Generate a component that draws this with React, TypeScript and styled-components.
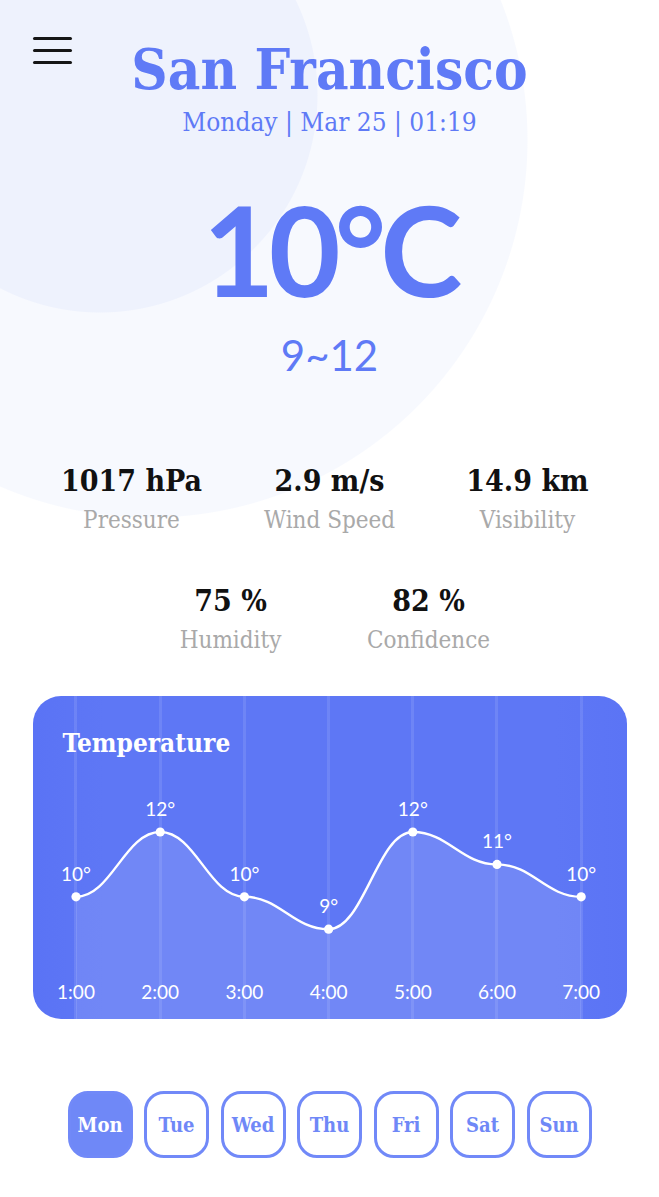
import React from "react";
import styled, { createGlobalStyle } from "styled-components";

const GlobalStyle = createGlobalStyle`
  html, body { margin: 0; padding: 0; background: #ffffff; }
  * { box-sizing: border-box; }
`;

const SLAB = `"DejaVu Serif Condensed", "DejaVu Serif", serif`;
const SANS = `Lato, "Noto Sans", sans-serif`;
const PRIMARY = "#5f7af6";

const Page = styled.div`
  width: 659px;
  min-height: 1197px;
  overflow: hidden;
  background:
    radial-gradient(circle 218px at 100px 95px, #eef2fd 217px, rgba(238, 242, 253, 0) 218px),
    radial-gradient(circle 378px at 150px 140px, #f7f9fe 377px, rgba(247, 249, 254, 0) 378px),
    #ffffff;
  display: flex;
  flex-direction: column;
  align-items: center;
`;

const Header = styled.header`
  width: 100%;
  display: grid;
  grid-template-columns: 1fr auto 1fr;
  align-items: start;
`;

const MenuButton = styled.div`
  margin: 37px 0 0 33px;
  width: 39px;
  display: flex;
  flex-direction: column;
  gap: 9px;
`;

const MenuBar = styled.span`
  display: block;
  height: 3px;
  border-radius: 2px;
  background: #161616;
`;

const City = styled.h1`
  margin: 41px 0 0;
  font-family: ${SLAB};
  font-weight: 700;
  font-size: 56px;
  line-height: 56px;
  color: ${PRIMARY};
  white-space: nowrap;
`;

const DateLine = styled.div`
  grid-column: 1 / -1;
  margin-top: 10px;
  text-align: center;
  font-family: ${SLAB};
  font-size: 26px;
  line-height: 30px;
  color: ${PRIMARY};
`;

const Temp = styled.div`
  margin-top: 50px;
  font-family: ${SANS};
  font-weight: 700;
  font-size: 124px;
  line-height: 124px;
  letter-spacing: -6px;
  color: ${PRIMARY};
`;

const Range = styled.div`
  margin-top: 19px;
  font-family: ${SANS};
  font-size: 42px;
  line-height: 50px;
  color: ${PRIMARY};
`;

const Stats = styled.section`
  margin-top: 84px;
  width: 594px;
  display: flex;
  flex-wrap: wrap;
  justify-content: center;
  row-gap: 50px;
`;

const Stat = styled.div`
  width: 198px;
  display: flex;
  flex-direction: column;
  align-items: center;
  gap: 8px;
`;

const StatValue = styled.div`
  font-family: ${SLAB};
  font-weight: 700;
  font-size: 30px;
  line-height: 34px;
  color: #111111;
  white-space: nowrap;
`;

const StatLabel = styled.div`
  font-family: ${SLAB};
  font-size: 24px;
  line-height: 28px;
  color: #a9a9a9;
  white-space: nowrap;
`;

const ChartCard = styled.section`
  margin-top: 42px;
  width: 594px;
  height: 323px;
  border-radius: 28px;
  overflow: hidden;
  display: flex;
  flex-direction: column;
  background:
    repeating-linear-gradient(
      90deg,
      rgba(255, 255, 255, 0) 0px,
      rgba(255, 255, 255, 0) 41.5px,
      rgba(255, 255, 255, 0.1) 41.5px,
      rgba(255, 255, 255, 0.1) 44.5px,
      rgba(255, 255, 255, 0) 44.5px,
      rgba(255, 255, 255, 0) 84.2px
    ),
    linear-gradient(90deg, #5a73f5 0%, #5e77f5 12%, #5e77f5 88%, #5b74f5 100%);
`;

const ChartTitle = styled.h2`
  margin: 32px 0 0 30px;
  font-family: ${SLAB};
  font-weight: 700;
  font-size: 26px;
  line-height: 30px;
  color: #ffffff;
`;

const ChartSvg = styled.svg`
  display: block;
  margin-top: 2px;
  flex: none;
`;

const Days = styled.nav`
  margin-top: 72px;
  display: flex;
  gap: 11.5px;
`;

const DayButton = styled.button<{ $active?: boolean }>`
  width: 65px;
  height: 67px;
  padding: 0;
  border: 3px solid #7189f8;
  border-radius: 20px;
  background: ${(p) => (p.$active ? "#6f88f7" : "#ffffff")};
  color: ${(p) => (p.$active ? "#ffffff" : "#6f88f7")};
  font-family: ${SLAB};
  font-weight: 700;
  font-size: 20px;
  display: flex;
  align-items: center;
  justify-content: center;
`;

const temps = [10, 12, 10, 9, 12, 11, 10];
const hours = ["1:00", "2:00", "3:00", "4:00", "5:00", "6:00", "7:00"];
const CH_W = 594;
const CH_H = 259;

const px = (i: number) => 43 + i * 84.2;
const py = (t: number) => 72 + (12 - t) * 32.4;

function smoothPath(pts: [number, number][]) {
  let d = `M${pts[0][0]},${pts[0][1]}`;
  for (let i = 0; i < pts.length - 1; i++) {
    const [x0, y0] = pts[i];
    const [x1, y1] = pts[i + 1];
    const dx = (x1 - x0) * 0.42;
    d += ` C${x0 + dx},${y0} ${x1 - dx},${y1} ${x1},${y1}`;
  }
  return d;
}

function TemperatureChart() {
  const pts: [number, number][] = temps.map((t, i) => [px(i), py(t)]);
  const line = smoothPath(pts);
  const area = `${line} L${px(6)},${CH_H} L${px(0)},${CH_H} Z`;
  return (
    <ChartSvg width={CH_W} height={CH_H} viewBox={`0 0 ${CH_W} ${CH_H}`}>
      <path d={area} fill="rgba(255,255,255,0.12)" />
      <path d={line} fill="none" stroke="#ffffff" strokeWidth={2.4} />
      {pts.map(([x, y], i) => (
        <g key={i}>
          <circle cx={x} cy={y} r={4.6} fill="#ffffff" />
          <text
            x={x}
            y={y - 16}
            textAnchor="middle"
            fontFamily="Lato, sans-serif"
            fontSize={19}
            fill="#ffffff"
          >
            {temps[i]}°
          </text>
          <text
            x={x}
            y={239}
            textAnchor="middle"
            fontFamily="Lato, sans-serif"
            fontSize={19}
            fill="#ffffff"
          >
            {hours[i]}
          </text>
        </g>
      ))}
    </ChartSvg>
  );
}

const stats = [
  { value: "1017 hPa", label: "Pressure" },
  { value: "2.9 m/s", label: "Wind Speed" },
  { value: "14.9 km", label: "Visibility" },
  { value: "75 %", label: "Humidity" },
  { value: "82 %", label: "Confidence" },
];

const days = ["Mon", "Tue", "Wed", "Thu", "Fri", "Sat", "Sun"];

export default function App() {
  return (
    <>
      <GlobalStyle />
      <Page>
        <Header>
          <MenuButton aria-label="menu">
            <MenuBar />
            <MenuBar />
            <MenuBar />
          </MenuButton>
          <City>San Francisco</City>
          <span />
          <DateLine>Monday | Mar 25 | 01:19</DateLine>
        </Header>
        <Temp>10°C</Temp>
        <Range>9~12</Range>
        <Stats>
          {stats.map((s) => (
            <Stat key={s.label}>
              <StatValue>{s.value}</StatValue>
              <StatLabel>{s.label}</StatLabel>
            </Stat>
          ))}
        </Stats>
        <ChartCard>
          <ChartTitle>Temperature</ChartTitle>
          <TemperatureChart />
        </ChartCard>
        <Days>
          {days.map((d, i) => (
            <DayButton key={d} $active={i === 0}>
              {d}
            </DayButton>
          ))}
        </Days>
      </Page>
    </>
  );
}
